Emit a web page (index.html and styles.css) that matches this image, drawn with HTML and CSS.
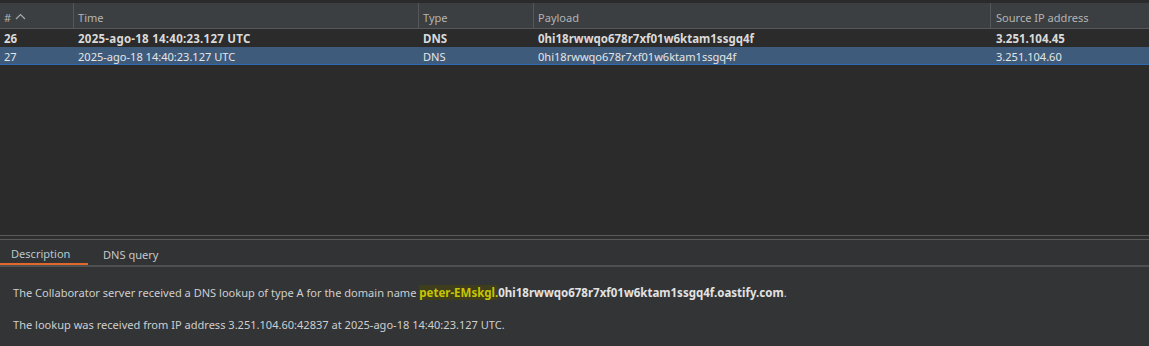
FILE: index.html
```html
<!DOCTYPE html>
<html>
<head>
<meta charset="utf-8">
<link rel="stylesheet" href="styles.css">
</head>
<body>
<div class="app">
  <div class="table-pane">
    <div class="thead">
      <div class="th c-num"># <svg class="sort" width="11" height="7" viewBox="0 0 11 7"><path d="M1 6 L5.5 1.5 L10 6" fill="none" stroke="#a9a9a9" stroke-width="1.2"/></svg></div>
      <div class="th c-time">Time</div>
      <div class="th c-type">Type</div>
      <div class="th c-payload">Payload</div>
      <div class="th c-ip">Source IP address</div>
    </div>
    <div class="tr bold">
      <div class="td c-num">26</div>
      <div class="td c-time">2025-ago-18 14:40:23.127 UTC</div>
      <div class="td c-type">DNS</div>
      <div class="td c-payload">0hi18rwwqo678r7xf01w6ktam1ssgq4f</div>
      <div class="td c-ip">3.251.104.45</div>
    </div>
    <div class="tr selected">
      <div class="td c-num">27</div>
      <div class="td c-time">2025-ago-18 14:40:23.127 UTC</div>
      <div class="td c-type">DNS</div>
      <div class="td c-payload">0hi18rwwqo678r7xf01w6ktam1ssgq4f</div>
      <div class="td c-ip">3.251.104.60</div>
    </div>
  </div>
  <div class="splitter"></div>
  <div class="detail">
    <div class="tabs">
      <div class="tab active">Description</div>
      <div class="tab">DNS query</div>
    </div>
    <div class="content">
      <p>The Collaborator server received a DNS lookup of type A for the domain name <b class="hl">peter-EMskgl.</b><b>0hi18rwwqo678r7xf01w6ktam1ssgq4f.oastify.com</b>.</p>
      <p>The lookup was received from IP address 3.251.104.60:42837 at 2025-ago-18 14:40:23.127 UTC.</p>
    </div>
  </div>
</div>
</body>
</html>
```
FILE: styles.css
```css
* { box-sizing: border-box; }
html, body { margin: 0; padding: 0; }
body {
  width: 1149px;
  height: 346px;
  overflow: hidden;
  background: #2b2b2b;
  font-family: "Noto Sans", "Open Sans", sans-serif;
  font-size: 11.05px;
  color: #d2d2d2;
}
.app { display: flex; flex-direction: column; height: 346px; }
.table-pane {
  flex: 0 0 235px;
  height: 235px;
  background: #2b2b2b;
  padding-top: 3px;
}
.thead {
  display: flex;
  height: 26px;
  background: #3c3f41;
  border-bottom: 1px solid #555759;
  color: #b4b4b4;
}
.th {
  display: flex;
  align-items: center;
  padding-left: 4px;
  padding-top: 3px;
  border-right: 1px solid #555759;
  height: 25px;
}
.th.c-ip { border-right: none; }
.sort { margin-left: 4px; margin-top: -1px; }
.c-num { width: 74px; }
.c-time { width: 345px; }
.c-type { width: 115px; }
.c-payload { width: 457px; }
.c-ip { flex: 1; }
.th.c-ip { padding-left: 5px; }
.tr {
  display: flex;
  height: 18px;
  align-items: center;
}
.td { padding-left: 4px; white-space: nowrap; }
.td.c-ip { padding-left: 5px; }
.tr.bold { font-weight: 700; color: #dadada; font-size: 11.5px; }
.tr.bold .c-time { letter-spacing: 0.25px; }
.tr.selected {
  background: #3f5b7b;
  border-bottom: 1px solid #2e6ab3;
  color: #e6e6e6;
  padding-top: 1px;
}
.splitter {
  flex: 0 0 5px;
  height: 5px;
  background: #2e2e2e;
  border-top: 1px solid #5a5a5a;
  border-bottom: 1px solid #5a5a5a;
}
.detail {
  flex: 1 1 auto;
  min-height: 0;
  overflow: hidden;
  background: #323436;
  display: flex;
  flex-direction: column;
}
.tabs {
  display: flex;
  flex: 0 0 27px;
  height: 27px;
  border-bottom: 2px solid #4e5052;
  background: #313335;
}
.tab {
  padding: 4px 16px 0 11px;
  display: flex;
  align-items: center;
  color: #c8c8c8;
  height: 25px;
}
.tab.active {
  width: 88px;
  border-bottom: 2px solid #e0682a;
  color: #b8c8cc;
}
.tab + .tab { padding-left: 15px; }
.content { padding: 18px 13px 0; }
.content p { margin: 0 0 17px; line-height: 15px; color: #cfcfcf; }
.content b { font-weight: 700; color: #e2e2e2; font-size: 11.5px; }
.content b.hl { background: #3e3e1c; color: #c6c600; }
```
